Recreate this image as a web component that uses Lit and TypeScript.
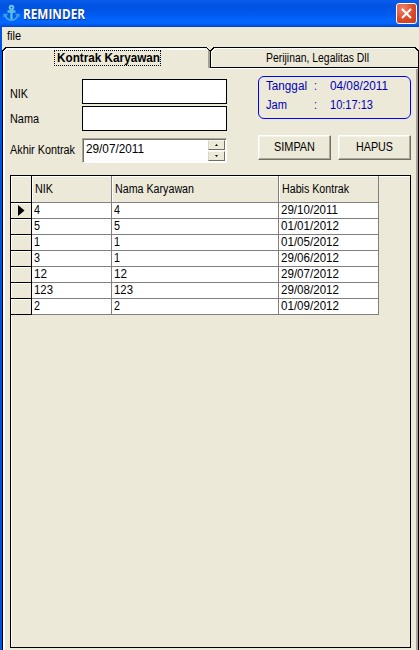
import { LitElement, html, css, svg } from "lit";
import { customElement, property } from "lit/decorators.js";

/** A single line label whose glyphs are condensed or widened to a given advance. */
@customElement("fit-text")
class FitText extends LitElement {
  @property({ type: Number }) w = 0;
  @property() text = "";
  static styles = css`
    :host { display: inline-block; white-space: pre; line-height: 16px; height: 16px; }
    .t { display: inline-block; transform-origin: 0 50%; }
  `;
  render() {
    return html`<span class="t">${this.text}</span>`;
  }
  updated() {
    const t = this.renderRoot.querySelector(".t") as HTMLElement;
    t.style.transform = "none";
    const natural = t.getBoundingClientRect().width;
    if (natural && this.w) t.style.transform = `scaleX(${this.w / natural})`;
    this.style.width = `${this.w}px`;
  }
}

type Cell = [string, number];
const rows: [Cell, Cell, Cell][] = [
  [["4", 6], ["4", 6], ["29/10/2011", 57]],
  [["5", 6], ["5", 6], ["01/01/2012", 58]],
  [["1", 6], ["1", 6], ["01/05/2012", 58]],
  [["3", 6], ["1", 6], ["29/06/2012", 58]],
  [["12", 13], ["12", 13], ["29/07/2012", 58]],
  [["123", 19], ["123", 19], ["29/08/2012", 58]],
  [["2", 6], ["2", 6], ["01/09/2012", 58]],
];

const txt = (text: string, w: number) => html`<fit-text .text=${text} .w=${w}></fit-text>`;

@customElement("app-root")
class AppRoot extends LitElement {
  static styles = css`
    :host {
      display: block; width: 419px; height: 650px; overflow: hidden;
      background: #ece9d8; color: #000;
      font: 12px/16px "Liberation Sans", Arial, sans-serif;
    }
    * { box-sizing: border-box; }
    .window { height: 650px; display: flex; flex-direction: column; }
    .title {
      height: 27px; flex: none; display: flex; align-items: center; padding: 0 3px 0 3px;
      background: linear-gradient(#0a5be8 0, #0a5be8 1px, #0155e2 4px, #0054e3 9px, #0059ee 14px, #0164fb 19px, #0166ff 23px, #0158e8 25px, #0043c8 27px);
      color: #fff; font: bold 14px/16px "Open Sans", "Noto Sans", sans-serif; text-shadow: 1px 1px #0a2a80;
    }
    .anchor { width: 17px; height: 18px; margin: -2px 3px 0 0; }
    .caption { flex: 1; }
    .close {
      width: 21px; height: 21px; border: 1px solid #fff; border-radius: 3px;
      background: radial-gradient(circle at 30% 25%, #ec8468, #dc4a28 55%, #c83a18);
      display: flex; align-items: center; justify-content: center; margin-right: -1px;
    }
    .body { flex: 1; display: flex; flex-direction: column; border-left: 2px solid #0054e3; }
    .menu { height: 19px; flex: none; padding: 1px 0 0 5px; }
    .tabs { height: 22px; flex: none; display: flex; margin-top: 1px; }
    .tab { position: relative; display: flex; justify-content: center; }
    .tab svg { position: absolute; left: 0; top: 0; }
    .tab.one { width: 208px; padding: 2px 0 0 3px; font-weight: bold; }
    .tab.two { width: 209px; padding: 3px 0 0 5px; }
    .focus { position: relative; height: 16px; width: 107px; padding-left: 2px; margin-top: 1px; border: 1px dotted #000; display: flex; align-items: center; }
    .page {
      flex: 1; border-left: 1px solid #000; border-right: 1px solid #000; display: flex;
      box-shadow: inset 2px 0 #fff, inset -2px 0 #a5a294; flex-direction: column; padding: 10px 7px 2px 7px;
    }
    .form { height: 96px; flex: none; display: flex; }
    .labels { width: 72px; display: flex; flex-direction: column; padding-top: 7px; }
    .labels fit-text:nth-child(2) { margin-top: 9px; }
    .labels fit-text:nth-child(3) { margin-top: 15px; }
    .fields { width: 145px; display: flex; flex-direction: column; }
    .input { height: 25px; background: #fff; border: 1px solid #000; margin-bottom: 2px; }
    .date {
      height: 25px; margin-top: 5px; background: #fff; display: flex; padding: 0 1px 0 2px;
      border: 1px solid; border-color: #aca899 #fff #fff #aca899; box-shadow: inset 1px 1px #716f64;
    }
    .date fit-text { margin-top: 2px; margin-left: 1px; }
    .spin { margin: 1px 0 1px auto; width: 17px; display: flex; flex-direction: column; gap: 1px; }
    .spin div {
      flex: 1; background: #ece9d8; border: 1px solid; border-color: #f8f7f0 #716f64 #716f64 #d8d5c5;
      display: flex; align-items: center; justify-content: center;
    }
    .side { margin-left: 31px; width: 153px; }
    .info {
      height: 43px; margin-top: -3px; border: 1px solid #00f; border-radius: 6px; color: #0000b8;
      display: grid; grid-template-columns: 48px 16px 1fr; grid-template-rows: 19px 16px; padding: 1px 0 0 7px;
    }
    .buttons { display: flex; gap: 7px; margin-top: 16px; }
    .btn {
      width: 73px; height: 25px; display: flex; align-items: center; justify-content: center; padding-bottom: 1px;
      border: 1px solid; border-color: #fff #716f64 #716f64 #fff; box-shadow: inset -1px -1px #aca899, inset 1px 1px #f5f3ea;
    }
    .grid { height: 473px; width: 401px; border: 1px solid #000; box-shadow: inset 1px 1px #fff; }
    .row { display: grid; grid-template-columns: 21px 80px 167px 100px; grid-template-rows: 16px; height: 16px; width: 368px; }
    .row > div {
      background: #fff; border-right: 1px solid #808080; border-bottom: 1px solid #808080;
      padding-left: 2px; display: flex; align-items: center; min-height: 0;
    }
    .row fit-text { margin-top: -1px; }
    .row > .sel { background: #ece9d8; border-color: #000; padding: 0 0 0 7px; box-shadow: inset 1px 1px #fff; }
    .row.head { height: 27px; grid-template-rows: 27px; }
    .row.head > div { background: #ece9d8; box-shadow: inset 1px 1px #fff; padding-left: 3px; }
    .row.head > .sel { border-color: #000; }
  `;

  anchor() {
    return html`<svg class="anchor" viewBox="0 0 17 18" fill="none" stroke="#3fa3dc" stroke-width="2">
      ${svg`<circle cx="8.5" cy="3.6" r="1.8" stroke="#6cc4ee"/>
      <path d="M8.5 5.5V16M4.5 7.500h8" stroke="#5cbce8" stroke-width="2.400"/>
      <path d="M2.400 11c.3 3 3 5 6.100 5.300c3.100-.3 5.800-2.300 6.100-5.300"/>
      <path d="M1 13.200V10.500H4.500M16 13.200V10.500H12.500" stroke-width="1.300"/>`}
    </svg>`;
  }

  render() {
    return html`<div class="window">
      <div class="title">
        ${this.anchor()}
        <div class="caption">${txt("REMINDER", 62)}</div>
        <div class="close"><svg width="13" height="13" viewBox="0 0 13 13"><path d="M2 2l9 9M11 2l-9 9" stroke="#fff" stroke-width="2.1"/></svg></div>
      </div>
      <div class="body">
        <div class="menu">${txt("file", 14)}</div>
        <div class="tabs">
          <div class="tab one">
            <svg width="208" height="22" viewBox="0 0 208 22" fill="none" shape-rendering="crispEdges">
              <path d="M1.500 22V5L5 1.500H203" stroke="#fff" stroke-width="2"/>
              <path d="M207 3V21" stroke="#a5a294" stroke-width="2"/>
              <path d="M.5 22V4L4 .5H204.500L208 4" stroke="#000"/>
            </svg>
            <div class="focus">${txt("Kontrak Karyawan", 103)}</div>
          </div>
          <div class="tab two">
            <svg width="209" height="22" viewBox="0 0 209 22" fill="none" shape-rendering="crispEdges">
              <path d="M1.500 20V5L5 1.500H204M0 21.500H207" stroke="#fff"/>
              <path d="M.5 20.500V4L4 .5H205L208.500 4V22M0 20.500H208" stroke="#000"/>
            </svg>
            ${txt("Perijinan, Legalitas Dll", 103)}
          </div>
        </div>
        <div class="page">
          <div class="form">
            <div class="labels">${txt("NIK", 18)}${txt("Nama", 29)}${txt("Akhir Kontrak", 65)}</div>
            <div class="fields">
              <div class="input"></div><div class="input"></div>
              <div class="date">${txt("29/07/2011", 58)}
                <div class="spin">
                  <div><svg width="3" height="2"><path d="M0 2L1.500 0L3 2z"/></svg></div>
                  <div><svg width="3" height="2"><path d="M0 0L1.500 2L3 0z"/></svg></div>
                </div>
              </div>
            </div>
            <div class="side">
              <div class="info">
                ${txt("Tanggal", 41)}${txt(":", 3)}${txt("04/08/2011", 58)}
                ${txt("Jam", 21)}${txt(":", 3)}${txt("10:17:13", 43)}
              </div>
              <div class="buttons"><div class="btn">${txt("SIMPAN", 41)}</div><div class="btn">${txt("HAPUS", 37)}</div></div>
            </div>
          </div>
          <div class="grid">
            <div class="row head"><div class="sel"></div><div>${txt("NIK", 18)}</div><div>${txt("Nama Karyawan", 79)}</div><div>${txt("Habis Kontrak", 67)}</div></div>
            ${rows.map((r, i) => html`<div class="row">
              <div class="sel">${i === 0 ? html`<svg width="7" height="11"><path d="M0 0L6.500 5.500L0 11z"/></svg>` : ""}</div>
              ${r.map(([t, w]) => html`<div>${txt(t, w)}</div>`)}
            </div>`)}
          </div>
        </div>
      </div>
    </div>`;
  }
}
